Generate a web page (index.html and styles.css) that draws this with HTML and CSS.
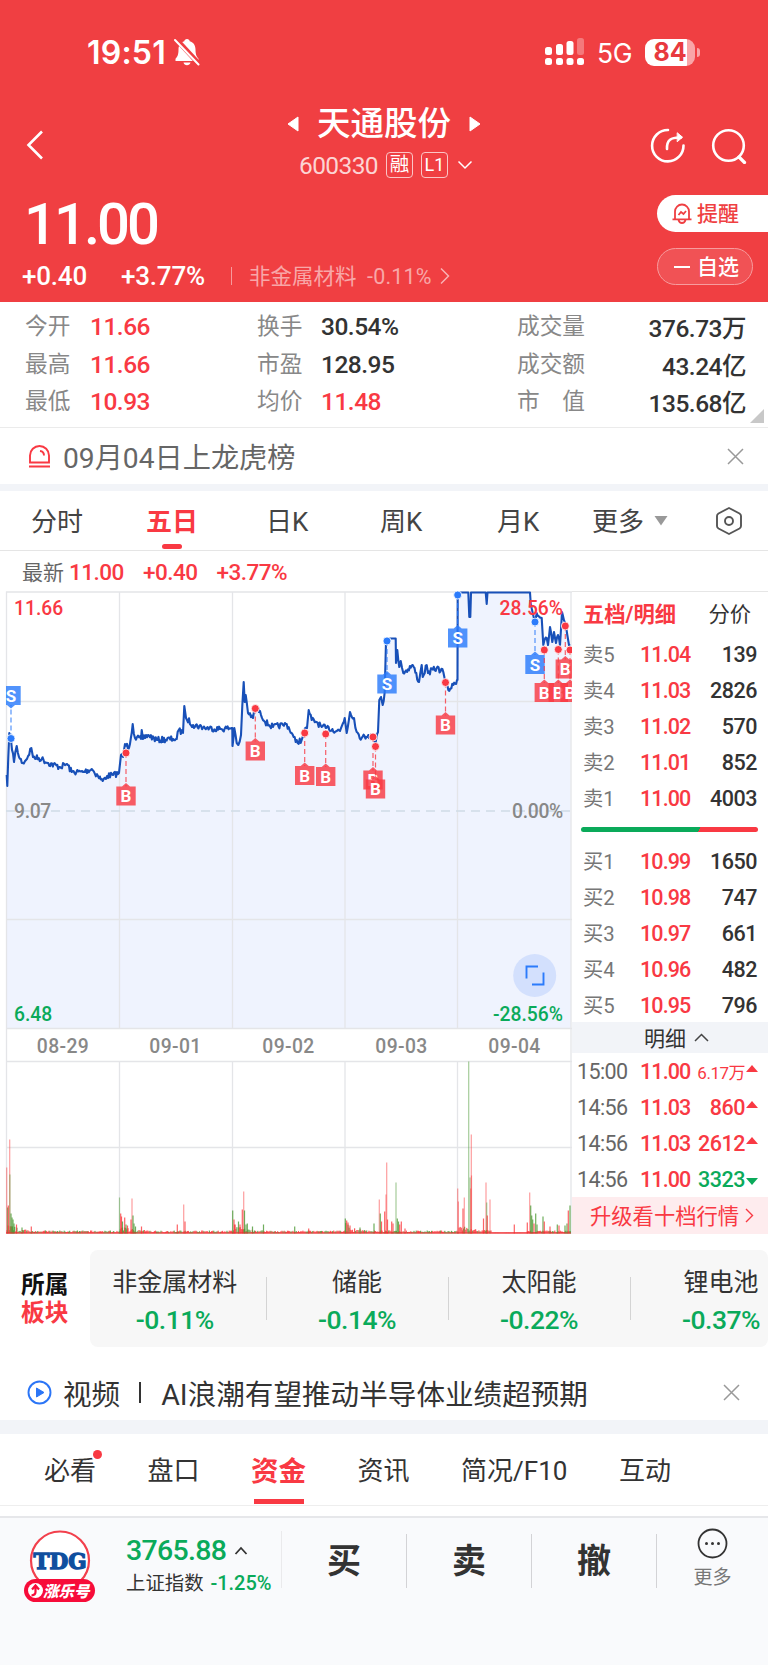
FILE: index.html
```html
<!DOCTYPE html>
<html lang="zh-CN">

<head>
    <meta charset="UTF-8">
    <meta name="viewport" content="width=device-width, initial-scale=1.0">
    <title>天通股份 600330</title>
    <link rel="stylesheet" href="styles.css">
</head>

<body>
    <header class="header">
        <div class="status-bar">
            <span class="clock">19:51</span>
            <svg class="mute" width="26" height="28" viewBox="0 0 26 28">
                <path d="M13 1c1.600 0 2.500 1 2.700 2.200 4 1.200 5.800 4.300 5.800 8.300 0 5 1 7 3 9.200v2.300H1.500v-2.300c2-2.200 3-4.200 3-9.200 0-4 1.800-7.100 5.800-8.300C10.500 2 11.400 1 13 1zM9.500 24.500h7c-.4 1.800-1.800 2.800-3.500 2.800s-3.100-1-3.500-2.800z" fill="#fff" />
                <path d="M2.500 1.500l23 25" stroke="#f03f42" stroke-width="5" />
                <path d="M1 2l23.500 24.500" stroke="#fff" stroke-width="2" stroke-linecap="round" />
            </svg>
            <svg class="signal" width="39" height="28" viewBox="0 0 39 28" fill="#fff">
                <rect x="0" y="9" width="7" height="8" rx="2.500" />
                <rect x="11" y="6" width="7" height="11" rx="2.500" />
                <rect x="21.500" y="3" width="7" height="14" rx="2.500" />
                <rect x="32" y="0" width="7" height="17" rx="2.500" opacity=".3" />
                <rect x="0" y="20" width="7" height="7" rx="2.500" />
                <rect x="11" y="20" width="7" height="7" rx="2.500" />
                <rect x="21.500" y="20" width="7" height="7" rx="2.500" />
                <rect x="32" y="20" width="7" height="7" rx="2.500" />
            </svg>
            <span class="network">5G</span>
            <div class="battery"><span>84</span></div>
            <i class="battery-tip"></i>
        </div>

        <div class="nav">
            <svg class="back" width="18" height="30" viewBox="0 0 18 30" fill="none" stroke="#fff" stroke-width="2.600">
                <path d="M16 1.500L2.500 15 16 28.500" />
            </svg>
            <div class="title">
                <div class="name">
                    <svg width="12" height="16" viewBox="0 0 12 16"><path d="M11 1v14L1 8z" fill="#fff" stroke="#fff" stroke-linejoin="round" /></svg>
                    <h1>天通股份</h1>
                    <svg width="12" height="16" viewBox="0 0 12 16"><path d="M1 1v14l10-7z" fill="#fff" stroke="#fff" stroke-linejoin="round" /></svg>
                </div>
                <div class="code">
                    <span>600330</span>
                    <b class="tag">融</b>
                    <b class="tag tag-level">L1</b>
                    <svg width="16" height="10" viewBox="0 0 16 10" fill="none" stroke="#fff" stroke-width="1.500"><path d="M1.500 1.500L8 8l6.500-6.500" /></svg>
                </div>
            </div>
            <div class="nav-icons">
                <svg width="36" height="36" viewBox="0 0 36 36" fill="none" stroke="#fff" stroke-width="2.600" stroke-linecap="round">
                    <path d="M18 2A15.700 15.700 0 1 0 33.500 17.500" />
                    <path d="M17 21c-.5-9 4-12 14-11.500" />
                    <path d="M27.500 5l5 4.200-5 4.300z" fill="#fff" stroke-width="1" stroke-linejoin="round" />
                </svg>
                <svg width="36" height="36" viewBox="0 0 36 36" fill="none" stroke="#fff" stroke-width="2.600" stroke-linecap="round">
                    <circle cx="17.500" cy="17.500" r="15.300" />
                    <path d="M28 29l5.500 5.500" stroke-width="3.200" />
                </svg>
            </div>
        </div>

        <div class="quote">
            <div class="quote-left">
                <div class="price">11.00</div>
                <div class="change">
                    <span class="diff">+0.40</span>
                    <span class="percent">+3.77%</span>
                    <i class="bar"></i>
                    <span class="industry">非金属材料</span>
                    <span class="industry-rate">-0.11%</span>
                    <svg width="10" height="18" viewBox="0 0 10 18" fill="none" stroke="#fff" stroke-width="1.500" opacity=".6"><path d="M1 1.500L8.500 9 1 16.500" /></svg>
                </div>
            </div>
            <div class="quote-right">
                <div class="pill pill-alert">
                    <svg width="20" height="21" viewBox="0 0 20 21" fill="none" stroke="#ef3f42" stroke-width="1.800">
                        <path d="M3 16V8.500a7 7 0 0 1 14 0V16M.5 16.300h19M6.500 17c.5 2 1.800 3 3.500 3s3-1 3.500-3" />
                        <path d="M6.500 12l2.500-3 2.500 2L14 8" />
                    </svg>
                    <span>提醒</span>
                </div>
                <div class="pill pill-fav"><i></i><span>自选</span></div>
            </div>
        </div>
    </header>

    <section class="stats">
        <span class="label">今开</span><span class="red">11.66</span>
        <span class="label">换手</span><span>30.54%</span>
        <span class="label">成交量</span><span class="end">376.73万</span>
        <span class="label">最高</span><span class="red">11.66</span>
        <span class="label">市盈</span><span>128.95</span>
        <span class="label">成交额</span><span class="end">43.24亿</span>
        <span class="label">最低</span><span class="red">10.93</span>
        <span class="label">均价</span><span class="red">11.48</span>
        <span class="label">市　值</span><span class="end">135.68亿</span>
        <svg class="corner" width="14" height="14" viewBox="0 0 14 14"><path d="M14 0v14H0z" fill="#c8c8c8" /></svg>
    </section>

    <section class="notice">
        <svg class="notice-icon" width="23" height="23" viewBox="0 0 23 23" fill="none" stroke="#f93943" stroke-width="1.900">
            <path d="M2 17.500V10.500a9.500 9.500 0 0 1 19 0v7zM1 21.500h21M12 6c2.500.3 4 2 4 4.500" />
        </svg>
        <span>09月04日上龙虎榜</span>
        <svg class="close" width="17" height="17" viewBox="0 0 17 17" stroke="#999" stroke-width="1.500"><path d="M1 1l15 15M16 1L1 16" /></svg>
    </section>

    <nav class="period-tabs">
        <span>分时</span>
        <span class="active">五日</span>
        <span>日K</span>
        <span>周K</span>
        <span>月K</span>
        <span class="more">更多</span>
        <svg class="caret" width="14" height="10" viewBox="0 0 14 10"><path d="M.5 0h13L7 9.500z" fill="#999" /></svg>
        <svg class="setting" width="28" height="30" viewBox="0 0 28 30" fill="none" stroke="#555" stroke-width="1.900" stroke-linejoin="round">
            <path d="M14 2l10.500 5.500q1.500 1 1.500 2.500v10q0 1.500-1.500 2.500L14 28 3.500 22.500Q2 21.500 2 20V10q0-1.500 1.500-2.500z" />
            <circle cx="14" cy="15" r="4" />
        </svg>
    </nav>

    <div class="latest">
        <span class="latest-label">最新</span>
        <span>11.00</span>
        <span>+0.40</span>
        <span>+3.77%</span>
    </div>

    <main class="market">
        <svg class="chart" id="chart" width="572" height="643" viewBox="0 591 572 643">
            <clipPath id="plot"><rect x="6" y="591" width="566" height="643" /></clipPath>
            <path id="area" fill="#eff3fe" />
            <path class="grid" d="M6.500 591.500V1028M6.500 1061V1234M119.500 591.500V1028M119.500 1061V1234M232.500 591.500V1028M232.500 1061V1234M345 591.500V1028M345 1061V1234M457.500 591.500V1028M457.500 1061V1234M571 591.500V1234M6 592H572M6 701.500H572M6 919.500H572M6 1028.500H572M6 1061.500H572M6 1147.500H572M6.500 1028V1062" />
            <path d="M6 811H572" stroke="#d0dce6" stroke-width="1.500" stroke-dasharray="9 6" />
            <text x="14" y="1020.500" class="green">6.48</text>
            <text x="14" y="818" class="gray">9.07</text>
            <path id="line" fill="none" stroke="#1850b8" stroke-width="2.100" stroke-linejoin="round" />
            <text x="14" y="615" class="red">11.66</text>
            <text x="563" y="615" class="red end">28.56%</text>
            <text x="563" y="818" class="gray end">0.00%</text>
            <text x="563" y="1020.500" class="green end">-28.56%</text>
            <text x="63" y="1053" class="gray mid">08-29</text>
            <text x="175.500" y="1053" class="gray mid">09-01</text>
            <text x="288.500" y="1053" class="gray mid">09-02</text>
            <text x="401.500" y="1053" class="gray mid">09-03</text>
            <text x="514.500" y="1053" class="gray mid">09-04</text>
            <g id="volume"></g>
            <g id="marks" clip-path="url(#plot)"></g>
            <circle cx="534.700" cy="975.500" r="21.500" fill="#d3e0fd" />
            <path d="M526.500 978.500v-12H538M532 984.500h11.500v-12" fill="none" stroke="#2b7bfb" stroke-width="1.900" />
        </svg>

        <aside class="book">
            <div class="book-tabs"><b>五档/明细</b><span>分价</span></div>
            <ul class="levels">
                <li><span>卖5</span><em>11.04</em><b>139</b></li>
                <li><span>卖4</span><em>11.03</em><b>2826</b></li>
                <li><span>卖3</span><em>11.02</em><b>570</b></li>
                <li><span>卖2</span><em>11.01</em><b>852</b></li>
                <li><span>卖1</span><em>11.00</em><b>4003</b></li>
            </ul>
            <div class="ratio"></div>
            <ul class="levels">
                <li><span>买1</span><em>10.99</em><b>1650</b></li>
                <li><span>买2</span><em>10.98</em><b>747</b></li>
                <li><span>买3</span><em>10.97</em><b>661</b></li>
                <li><span>买4</span><em>10.96</em><b>482</b></li>
                <li><span>买5</span><em>10.95</em><b>796</b></li>
            </ul>
            <div class="detail-bar">
                <span>明细</span>
                <svg width="15" height="9" viewBox="0 0 15 9" fill="none" stroke="#444" stroke-width="1.500"><path d="M1 8l6.500-6.500L14 8" /></svg>
            </div>
            <ul class="ticks">
                <li><span>15:00</span><em>11.00</em><b class="small">6.17万</b><i class="up"></i></li>
                <li><span>14:56</span><em>11.03</em><b>860</b><i class="up"></i></li>
                <li><span>14:56</span><em>11.03</em><b>2612</b><i class="up"></i></li>
                <li><span>14:56</span><em>11.00</em><b class="green">3323</b><i class="down"></i></li>
            </ul>
            <div class="upgrade">
                <span>升级看十档行情</span>
                <svg width="9" height="15" viewBox="0 0 9 15" fill="none" stroke="#f93943" stroke-width="1.400"><path d="M1 1l6.500 6.500L1 14" /></svg>
            </div>
        </aside>
    </main>

    <section class="sectors">
        <div class="sectors-title">所属<br><span>板块</span></div>
        <div class="sectors-list">
            <div class="sector"><span>非金属材料</span><b>-0.11%</b></div>
            <div class="sector"><span>储能</span><b>-0.14%</b></div>
            <div class="sector"><span>太阳能</span><b>-0.22%</b></div>
            <div class="sector"><span>锂电池</span><b>-0.37%</b></div>
        </div>
    </section>

    <section class="video">
        <svg width="25" height="25" viewBox="0 0 25 25">
            <circle cx="12.500" cy="12.500" r="11" fill="none" stroke="#2b75f6" stroke-width="1.900" />
            <path d="M9.500 8v9l7.500-4.500z" fill="#2b75f6" stroke="#2b75f6" stroke-linejoin="round" />
        </svg>
        <span class="video-type">视频</span><i></i><span>AI浪潮有望推动半导体业绩超预期</span>
        <svg class="close" width="17" height="17" viewBox="0 0 17 17" stroke="#999" stroke-width="1.500"><path d="M1 1l15 15M16 1L1 16" /></svg>
    </section>

    <nav class="info-tabs">
        <span class="dot">必看</span>
        <span>盘口</span>
        <span class="active">资金</span>
        <span>资讯</span>
        <span>简况/F10</span>
        <span>互动</span>
    </nav>

    <footer class="footer">
        <svg class="logo" width="74" height="76" viewBox="0 0 74 76">
            <circle cx="37" cy="31.500" r="29" fill="#fff" stroke="#f2404c" stroke-width="2.200" />
            <text x="37" y="39.500" class="logo-name" textLength="53" lengthAdjust="spacingAndGlyphs">TDG</text>
            <rect x="1" y="50" width="71" height="23" rx="11.500" fill="#f70c39" />
            <circle cx="12.500" cy="61.500" r="7.500" fill="#fff" />
            <path d="M12.500 57v6q0 3-4 3.500M9 60.500l3.500-4 3.500 4" fill="none" stroke="#f70c39" stroke-width="2.200" />
            <text x="20" y="67.500" class="logo-badge">涨乐号</text>
        </svg>
        <div class="index">
            <div class="index-value">3765.88
                <svg width="14" height="9" viewBox="0 0 14 9" fill="none" stroke="#333" stroke-width="1.800"><path d="M1.500 8L7 2l5.500 6" /></svg>
            </div>
            <div class="index-name">上证指数 <b>-1.25%</b></div>
        </div>
        <span class="action">买</span>
        <span class="action">卖</span>
        <span class="action">撤</span>
        <div class="footer-more">
            <svg width="31" height="31" viewBox="0 0 31 31">
                <circle cx="15.500" cy="15.500" r="14" fill="none" stroke="#333" stroke-width="1.800" />
                <g fill="#333"><circle cx="9.500" cy="15.500" r="1.500" /><circle cx="15.500" cy="15.500" r="1.500" /><circle cx="21.500" cy="15.500" r="1.500" /></g>
            </svg>
            <span>更多</span>
        </div>
    </footer>

    <script src="chart.js"></script>
</body>

</html>
```
FILE: styles.css
```css
* {
    margin: 0;
    padding: 0;
    box-sizing: border-box;
}

body {
    width: 768px;
    height: 1665px;
    overflow: hidden;
    background: #fff;
    color: #333;
    font-family: Roboto, "Noto Sans CJK SC", sans-serif;
}

ul {
    list-style: none;
}

i,
em {
    font-style: normal;
}

svg {
    display: block;
    flex: none;
}

span,
b {
    white-space: nowrap;
}

.red {
    color: #f93943;
    fill: #f93943;
}

.green {
    color: #0aaa5a;
    fill: #0aaa5a;
}

/* header */

.header {
    height: 302px;
    background: #f03f42;
    color: #fff;
}

.status-bar {
    height: 104px;
    padding-left: 87px;
    display: flex;
    align-items: center;
}

.clock {
    width: 87px;
    font: 600 32px Inter, sans-serif;
    letter-spacing: 0.2px;
}

.signal {
    margin-left: 345px;
}

.network {
    width: 47px;
    margin-left: 13px;
    padding-top: 2px;
    font: 400 26.5px/30px Inter, sans-serif;
    letter-spacing: -0.3px;
}

.battery {
    width: 50px;
    height: 27px;
    margin-left: 1px;
    border-radius: 9px;
    background: linear-gradient(90deg, #fff 84%, #f9a5a7 84%);
    color: #e8393e;
    font: 700 25px/27px Inter, sans-serif;
    text-align: center;
}

.battery-tip {
    width: 3px;
    height: 9px;
    margin-left: 2px;
    border-radius: 0 4px 4px 0;
    background: #f9a5a7;
}

.nav {
    height: 86px;
    padding: 0 21px 0 26px;
    display: flex;
    justify-content: space-between;
}

.back {
    margin-top: 26px;
}

.title {
    margin-left: 74px;
    display: flex;
    flex-direction: column;
    align-items: center;
}

.name {
    height: 40px;
    display: flex;
    align-items: center;
    gap: 18px;
}

.name h1 {
    font-size: 33.5px;
    line-height: 40px;
    font-weight: 500;
}

.code {
    height: 42px;
    padding-left: 4px;
    display: flex;
    align-items: center;
    font-size: 24.5px;
    letter-spacing: -0.6px;
    color: #fcd4d4;
}

.tag {
    width: 27px;
    height: 26px;
    margin-left: 8px;
    border: 1px solid #fbc5c6;
    border-radius: 4px;
    color: #fff;
    font-size: 19.5px;
    line-height: 23px;
    font-weight: 400;
    letter-spacing: 0;
    text-align: center;
}

.tag-level {
    font-size: 18px;
    line-height: 24px;
}

.code svg {
    margin-left: 9px;
}

.nav-icons {
    margin-top: 24px;
    display: flex;
    gap: 25px;
}

.quote {
    display: flex;
    justify-content: space-between;
}

.price {
    height: 68px;
    padding-left: 24px;
    font-size: 58px;
    line-height: 68px;
    font-weight: 500;
    letter-spacing: -3px;
}

.change {
    height: 36px;
    padding-left: 22px;
    display: flex;
    align-items: center;
    font-size: 26px;
    font-weight: 500;
    letter-spacing: -0.2px;
}

.diff {
    width: 99px;
}

.percent {
    width: 110px;
}

.bar {
    width: 1px;
    height: 18px;
    margin-right: 17px;
    background: #f79a9c;
}

.industry {
    width: 118px;
    padding-bottom: 4px;
    color: #f8a7a8;
    font-size: 21.5px;
    font-weight: 400;
    letter-spacing: 0;
}

.industry-rate {
    width: 73px;
    color: #f8a7a8;
    font-size: 21.5px;
    font-weight: 400;
    letter-spacing: 0.2px;
}

.quote-right {
    padding-top: 5px;
}

.pill {
    width: 111px;
    height: 37px;
    padding-left: 15px;
    display: flex;
    align-items: center;
    font-size: 21px;
    font-weight: 500;
}

.pill span {
    padding-bottom: 3px;
}

.pill-alert {
    border-radius: 19px 0 0 19px;
    background: #fff;
    color: #ef3f42;
}

.pill-alert span {
    margin-left: 5px;
}

.pill-fav {
    width: 96px;
    margin-top: 16px;
    border: 1px solid #f79c9e;
    border-radius: 19px;
    background: #f15255;
}

.pill-fav i {
    width: 16px;
    height: 2px;
    margin: 0 7px 0 1px;
    background: #fff;
}

/* quote numbers */

.stats {
    position: relative;
    height: 126px;
    padding: 6px 22px 0 25px;
    display: grid;
    grid-template-columns: 65px 167px 64px 196px 90px 1fr;
    grid-auto-rows: 37.5px;
    align-items: center;
    border-bottom: 1px solid #ebebeb;
    font-size: 24.5px;
    font-weight: 500;
    letter-spacing: -0.5px;
}

.stats .label {
    padding-bottom: 4px;
    color: #888;
    font-size: 22.7px;
    font-weight: 400;
    letter-spacing: 0;
}

.stats .end {
    text-align: right;
}

.corner {
    position: absolute;
    right: 4px;
    bottom: 4px;
}

.notice {
    height: 56px;
    padding: 0 24px 0 28px;
    display: flex;
    align-items: center;
    color: #666;
    font-size: 28.2px;
}

.notice span {
    margin-left: 12px;
    padding-bottom: 1px;
}

.close {
    margin-left: auto;
}

/* period tabs */

.period-tabs {
    height: 67px;
    padding-left: 31px;
    display: flex;
    align-items: center;
    border-top: 7px solid #f2f4f8;
    border-bottom: 1px solid #e5e5e5;
    font-size: 26px;
    color: #444;
}

.period-tabs span {
    position: relative;
    width: 117px;
    padding-bottom: 2px;
}

.period-tabs span:nth-child(1) {
    width: 115px;
}

.period-tabs .active {
    width: 120px;
    color: #f93943;
    font-weight: 700;
}

.period-tabs span:nth-child(3) {
    width: 114px;
}

.period-tabs span:nth-child(5) {
    width: 95px;
}

.period-tabs .more {
    width: 62px;
}

.period-tabs .active::after {
    content: "";
    position: absolute;
    left: 16px;
    bottom: -9px;
    width: 20px;
    height: 5px;
    border-radius: 2.5px;
    background: #f93943;
}

.setting {
    margin-left: 47px;
}

.latest {
    height: 40px;
    padding: 1px 0 0 22px;
    display: flex;
    align-items: center;
    gap: 19px;
    color: #f93943;
    font-size: 22.5px;
    font-weight: 500;
    letter-spacing: -0.5px;
}

.latest-label {
    margin-right: -14px;
    padding-bottom: 2px;
    color: #666;
    font-size: 21px;
    font-weight: 400;
    letter-spacing: 0;
}

/* chart and order book */

.market {
    height: 643px;
    display: flex;
}

.chart text {
    font-size: 19.3px;
    font-weight: 500;
}

.chart .gray {
    fill: #888;
    letter-spacing: -0.3px;
}

.chart .end {
    text-anchor: end;
}

.chart .mid {
    text-anchor: middle;
    letter-spacing: 0.4px;
}

.grid {
    fill: none;
    stroke: #e4e5e8;
    stroke-width: 1.3;
}

#marks text {
    fill: #fff;
    font-size: 17px;
    font-weight: 700;
    text-anchor: middle;
}

.book {
    width: 196px;
    border-top: 1px solid #e6e6e6;
}

.book-tabs {
    height: 44px;
    padding: 0 17px 3px 11px;
    display: flex;
    align-items: center;
    justify-content: space-between;
    font-size: 21.3px;
}

.book-tabs b {
    color: #f93943;
}

.levels li,
.ticks li {
    height: 36px;
    display: flex;
    align-items: center;
    font-size: 21.5px;
    font-weight: 500;
}

.levels li {
    padding: 0 11px;
}

.levels span {
    width: 57px;
    padding-bottom: 2px;
    color: #777;
    font-size: 20.3px;
    font-weight: 400;
}

.levels em,
.ticks em {
    color: #f93943;
    letter-spacing: -0.9px;
}

.levels b {
    margin-left: auto;
    font-weight: 500;
    letter-spacing: -0.5px;
}

.ratio {
    height: 5px;
    margin: 11px 10px 11px 9px;
    border-radius: 3px;
    background: linear-gradient(120deg, #0aaa5a 66.5%, #f93943 66.6%);
}

.detail-bar {
    height: 31px;
    margin-top: -1px;
    display: flex;
    align-items: center;
    justify-content: center;
    gap: 8px;
    padding-left: 17px;
    padding-right: 4px;
    background: #f2f4f8;
    font-size: 21px;
}

.detail-bar span {
    padding-bottom: 2px;
}

.ticks li {
    padding: 1px 10px 0 5px;
}

.ticks span {
    width: 63px;
    color: #666;
    font-weight: 400;
    letter-spacing: -0.6px;
}

.ticks b {
    margin-left: auto;
    color: #f93943;
    font-weight: 500;
    letter-spacing: -0.5px;
}

.ticks .small {
    font-size: 17px;
    font-weight: 400;
}

.ticks .green {
    color: #0aaa5a;
}

.ticks i {
    margin: 0 0 7px 1px;
    border: 6.5px solid transparent;
    border-top: 0;
    border-bottom: 7px solid #f93943;
}

.ticks .down {
    margin: 4px 0 0 1px;
    border-top: 7px solid #0aaa5a;
    border-bottom: 0;
}

.upgrade {
    height: 37px;
    padding-left: 18px;
    display: flex;
    align-items: center;
    gap: 6px;
    background: #feecee;
    color: #f93943;
    font-size: 21.3px;
}

.upgrade span {
    padding-bottom: 2px;
}

/* sectors */

.sectors {
    height: 130px;
    padding: 16px 0 17px 21px;
    display: flex;
    align-items: center;
}

.sectors-title {
    width: 69px;
    color: #111;
    font-size: 23.7px;
    line-height: 28px;
    font-weight: 700;
}

.sectors-title span {
    color: #f93943;
}

.sectors-list {
    flex: 1;
    height: 97px;
    display: grid;
    grid-template-columns: 176.5px 182px 182px 182px;
    overflow: hidden;
    border-radius: 8px;
    background: #f7f7f7;
}

.sector {
    position: relative;
    padding: 14px 1px 0 0;
    display: flex;
    flex-direction: column;
    align-items: center;
    font-size: 25px;
    line-height: 37px;
}

.sector:nth-child(1) {
    padding-right: 7px;
}

.sector b {
    color: #0aaa5a;
    font-size: 26.5px;
    font-weight: 500;
    letter-spacing: -0.5px;
}

.sector:not(:last-child)::after {
    content: "";
    position: absolute;
    right: 0;
    top: 27px;
    width: 1px;
    height: 43px;
    background: #d4d4d4;
}

.video {
    height: 70px;
    padding: 0 28px 0 27px;
    display: flex;
    align-items: center;
    border-bottom: 14px solid #f2f4f8;
    font-size: 28.6px;
}

.video-type {
    margin-left: 11px;
}

.video i {
    width: 2px;
    height: 21px;
    margin: 0 20px 0 19px;
    background: #333;
}

/* info tabs */

.info-tabs {
    height: 72px;
    padding: 0 0 2px 44px;
    display: flex;
    align-items: center;
    gap: 51.5px;
    border-bottom: 1px solid #eee;
    font-size: 26px;
}

.info-tabs span {
    position: relative;
}

.info-tabs .active {
    color: #f93943;
    font-size: 27.5px;
    font-weight: 700;
}

.info-tabs .active::after {
    content: "";
    position: absolute;
    left: 3px;
    bottom: -15px;
    width: 50px;
    height: 5px;
    background: #f93943;
}

.dot::after {
    content: "";
    position: absolute;
    right: -6px;
    top: 0;
    width: 9px;
    height: 9px;
    border-radius: 50%;
    background: #f93943;
}

/* footer */

.footer {
    height: 149px;
    margin-top: 10px;
    padding: 13px 0 0 23px;
    display: flex;
    align-items: flex-start;
    border-top: 2px solid #e6e7ea;
    background: #f9fafc;
}

.logo {
    margin-top: -2px;
}

.logo-name {
    fill: #0f4f9f;
    stroke: #0f4f9f;
    stroke-width: 1.4;
    font: 700 22px "DejaVu Serif", serif;
    text-anchor: middle;
}

.logo-badge {
    fill: #fff;
    font-size: 15.5px;
    font-weight: 900;
    font-style: italic;
}

.index {
    width: 156px;
    height: 57px;
    margin-left: 29px;
    border-right: 1px solid #eaeaec;
}

.index-value {
    height: 38px;
    display: flex;
    align-items: center;
    gap: 8px;
    color: #0aaa5a;
    font-size: 28.5px;
    font-weight: 500;
    letter-spacing: -0.7px;
}

.index-name {
    font-size: 19.4px;
    line-height: 28px;
    white-space: nowrap;
}

.index-name b {
    margin-left: 2px;
    color: #0aaa5a;
    font-size: 20px;
    font-weight: 500;
}

.action {
    width: 125px;
    height: 54px;
    margin-top: 3px;
    border-right: 1px solid #d3d3d6;
    font-size: 34px;
    line-height: 54px;
    font-weight: 700;
    text-align: center;
}

.footer-more {
    flex: 1;
    margin-top: -3px;
    display: flex;
    flex-direction: column;
    align-items: center;
    color: #777;
    font-size: 19px;
    line-height: 38px;
}
```
FILE: chart.js
```javascript
const SVG = 'http://www.w3.org/2000/svg';

// Price line, one array per trading day
const days = [
    [[6.7, 775], [7.3, 786], [9.3, 733], [11, 740], [14, 762], [16.7, 746], [19, 757], [22.7, 763], [26, 760], [31.3, 748], [33, 757], [41.7, 759], [48.3, 763], [60, 767], [67, 764], [71.7, 772], [83, 772], [91.7, 769], [98, 776], [102.7, 781], [107, 776], [113, 775], [119, 773]],
    [[119.3, 770], [121, 755], [123, 757], [125, 744], [129, 748], [132.7, 724], [135, 738], [141, 739], [141.7, 730], [143, 739], [148, 735], [156.7, 740], [173, 739], [176.7, 739], [178.7, 730], [183, 733], [184.3, 706], [186, 718], [193, 725], [206.7, 728], [220, 729], [232.3, 728]],
    [[232.5, 746], [234.3, 728], [236.7, 743], [238.3, 745], [241, 735], [243.7, 682], [244.7, 702], [245.7, 695], [248, 713], [253, 718], [255, 708], [260, 711], [265, 722], [273, 727], [283, 725], [286.7, 724], [291.7, 733], [295.7, 742], [301.7, 740], [304, 732], [307, 728], [308.7, 710], [311.7, 720], [316.7, 722], [321.7, 727], [325.7, 728], [340, 731], [344.7, 718]],
    [[346.7, 733], [350, 712], [354, 718], [356.7, 732], [361.7, 738], [368.3, 735], [373, 737], [375.7, 742], [378, 732], [379.3, 700], [381, 697], [382.7, 705], [384.7, 692], [386, 642], [387.3, 638.5], [395.7, 638.5], [396, 663], [397.3, 650], [399.3, 667], [400.7, 661], [403.3, 673], [412.7, 665], [419, 682], [421.7, 665], [422.7, 677], [426.7, 665], [428, 673], [436.7, 668], [443.3, 672], [445.7, 682], [448.3, 690], [453.3, 685], [457, 680]],
    [[457.5, 680], [457.7, 592.5], [468.3, 592.5], [469.3, 617], [470.3, 617], [471, 592.5], [485.7, 592.5], [486.7, 604], [487.5, 592.5], [530, 592.5], [530.7, 603], [532.7, 613], [535, 622], [536.7, 613], [541.7, 618], [543.3, 645], [546.7, 638], [548, 645], [550, 627], [552.3, 642], [554, 632], [556, 643], [558, 635], [560, 645], [562, 612], [565, 622], [567.3, 635], [569, 645], [570.3, 645]]
];

// Fixed seed so the ticks look the same on every load
let seed = 7;
function random() {
    seed = (seed * 16807) % 2147483647;
    return seed / 2147483647;
}

const points = [];
days.forEach(day => {
    day.forEach((p, i) => {
        points.push(p);
        const next = day[i + 1];
        if (!next || next[1] === p[1] && p[1] < 640) return;
        const steps = Math.floor((next[0] - p[0]) / 0.9);
        for (let s = 1; s < steps; s++) {
            const t = s / steps;
            const noise = (random() - 0.5) * 6;
            points.push([p[0] + (next[0] - p[0]) * t, p[1] + (next[1] - p[1]) * t + noise]);
        }
    });
});

const d = 'M' + points.map(p => p[0].toFixed(1) + ' ' + p[1].toFixed(1)).join('L');
document.getElementById('line').setAttribute('d', d);
document.getElementById('area').setAttribute('d', d + 'L571 1028L6.5 1028Z');

function add(parent, name, attrs, text) {
    const el = document.createElementNS(SVG, name);
    Object.keys(attrs).forEach(key => el.setAttribute(key, attrs[key]));
    if (text) el.textContent = text;
    parent.appendChild(el);
}

// Volume: [x, height, r = up / g = down]
const spikes = [
    [6.7, 66, 'r'], [7.7, 26, 'g'], [8.3, 28, 'r'], [9.7, 94, 'r'], [9.9, 59, 'g'], [11, 20, 'g'], [12, 16, 'g'], [13, 14, 'g'], [14, 10, 'g'], [16.5, 9, 'r'], [22, 6, 'g'], [31.3, 7, 'r'],
    [119.5, 36, 'g'], [120.7, 20, 'r'], [121.5, 17, 'r'], [122.5, 12, 'g'], [124.7, 16, 'r'], [126, 9, 'g'], [127.5, 8, 'r'], [131, 14, 'r'], [132, 35, 'r'], [133, 18, 'g'], [134, 10, 'g'], [135.5, 7, 'g'], [141.5, 7, 'r'], [177.3, 9, 'r'], [183.7, 29, 'r'], [185, 12, 'r'],
    [232.7, 23, 'g'], [234, 14, 'r'], [235, 9, 'r'], [238.5, 12, 'g'], [240, 9, 'r'], [242.3, 24, 'r'], [243.7, 42, 'r'], [244.5, 23, 'g'], [246, 9, 'g'], [247.3, 10, 'g'], [252.5, 7, 'g'], [263.5, 9, 'g'], [294.7, 7, 'g'], [308.7, 5, 'r'],
    [345.3, 15, 'g'], [346.7, 13, 'r'], [348, 11, 'r'], [350, 8, 'r'], [360, 6, 'g'], [374, 10, 'g'], [379.3, 34, 'r'], [380.3, 20, 'g'], [381.5, 12, 'r'], [384.7, 22, 'r'], [386, 39, 'r'], [386.7, 71, 'r'], [387.5, 14, 'r'], [391.7, 12, 'r'], [393, 10, 'r'], [396, 51, 'g'], [397.3, 15, 'g'], [398.5, 12, 'g'], [399.7, 9, 'r'], [401.3, 12, 'r'], [405, 5, 'r'],
    [457.7, 45, 'r'], [458.4, 32, 'r'], [463, 25, 'r'], [464.3, 36, 'r'], [468.7, 172, 'g'], [470, 56, 'g'], [470.7, 45, 'r'], [471.3, 99, 'r'], [471.5, 58, 'r'], [483.5, 15, 'r'], [486, 51, 'r'], [486.7, 31, 'g'], [487.3, 18, 'r'], [490, 34, 'r'], [514.3, 9, 'r'], [527.3, 11, 'r'], [529.7, 41, 'r'], [530.7, 28, 'g'], [531.7, 18, 'g'], [532.7, 14, 'g'], [534, 10, 'r'], [535.7, 20, 'g'], [537, 9, 'g'], [543, 17, 'g'], [544.3, 12, 'r'], [550, 7, 'r'], [557.3, 9, 'g'], [559, 8, 'r'], [565, 8, 'g'], [567, 10, 'g'], [568.3, 23, 'r'], [570, 28, 'g']
];
const volumeColor = { r: '#fb3b3f', g: '#4c9a35' };
const volume = document.getElementById('volume');

function addBar(x, height, type, opacity) {
    add(volume, 'rect', { x: x - 0.6, y: 1233.5 - height, width: 1.2, height: height, fill: volumeColor[type], opacity: opacity });
}

for (let x = 7; x < 571; x += 1.1) {
    // quiet base level, higher right after the open
    const open = Math.exp(-((x - 6.5) % 113) / 10) * 9;
    const quiet = x > 492 && x < 527;
    addBar(x, 1.2 + (quiet ? 0 : random() * 1.8 + open * random()), quiet || random() > 0.4 ? 'r' : 'g', 0.85);
}
spikes.forEach(s => {
    addBar(s[0], s[1], s[2], s[1] > 28 ? 0.5 : 0.8);
});
add(volume, 'rect', { x: 6, y: 1232.2, width: 565, height: 1.5, fill: '#e8262b', opacity: 0.6 });

// Trade marks: [type, dot x, dot y, tag centre y]
const marks = [
    ['S', 11, 738.5, 695.5], ['B', 126, 753, 796], ['B', 255.3, 708.5, 751], ['B', 304.7, 733, 775.5], ['B', 325.7, 734, 776.5],
    ['B', 373, 737, 780], ['B', 375.5, 746.5, 789], ['S', 387, 641, 684], ['B', 445.5, 682.5, 725], ['S', 457.7, 595, 638],
    ['S', 535, 622, 664.5], ['B', 544.3, 650, 692.5], ['B', 558.3, 649.5, 692.5], ['B', 565.3, 626, 669], ['B', 570, 650, 692.5]
];
const marksGroup = document.getElementById('marks');

marks.forEach(([type, x, y, tag]) => {
    const color = type === 'S' ? '#2b7bfb' : '#f93943';
    const dir = tag > y ? -1 : 1;
    const edge = tag + dir * 9.5;
    add(marksGroup, 'path', { d: `M${x} ${y}V${edge}`, stroke: color, 'stroke-width': 1.2, 'stroke-dasharray': '5 3', opacity: 0.8 });
    add(marksGroup, 'path', { d: `M${x - 9.7} ${tag - 9.5}h19.4v19h-19.4zM${x - 4} ${edge}L${x} ${edge + dir * 3.5}L${x + 4} ${edge}z`, fill: color, opacity: 0.82 });
    add(marksGroup, 'circle', { cx: x, cy: y, r: 4, fill: color, stroke: '#fff', 'stroke-width': 0.8 });
    add(marksGroup, 'text', { x: x, y: tag + 6 }, type);
});
```
